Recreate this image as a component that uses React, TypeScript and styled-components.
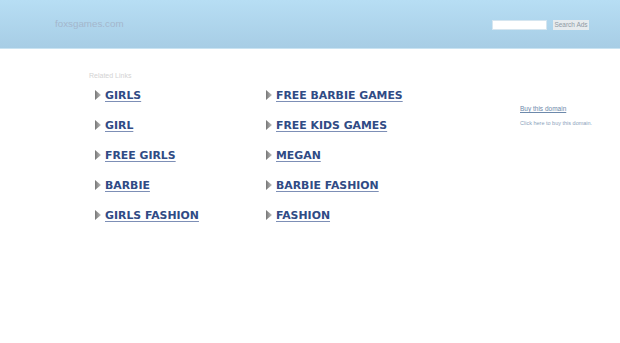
import React from 'react';
import styled, {createGlobalStyle} from 'styled-components';

const GlobalStyle = createGlobalStyle`
	html, body {
		margin: 0;
		padding: 0;
		background: #fff;
		font-family: "Liberation Sans", Arial, sans-serif;
	}
`;

const Header = styled.header`
	height: 48px;
	display: flex;
	align-items: center;
	justify-content: space-between;
	padding: 0 31px 0 55px;
	background: linear-gradient(#b7def4, #a7cde5);
	border-bottom: 1px solid #c9e3f2;
`;

const Domain = styled.div`
	font-size: 9.8px;
	color: #a4b6cc;
	margin-top: -2px;
`;

const Search = styled.form`
	display: flex;
	align-items: center;
	gap: 6px;
	margin-top: 2px;
`;

const Input = styled.input`
	width: 53px;
	height: 8px;
	padding: 0;
	border: 1px solid #d6e6f0;
	background: #fff;
	box-sizing: content-box;
`;

const Button = styled.button`
	height: 10px;
	width: 36px;
	padding: 0;
	border: none;
	background: #e6ebee;
	color: #8f9aa4;
	font-family: "Liberation Sans", Arial, sans-serif;
	font-size: 6.5px;
	line-height: 10px;
`;

const Main = styled.main`
	display: flex;
	padding-top: 22px;
`;

const Related = styled.section`
	margin-left: 89px;
	width: 420px;
`;

const Caption = styled.div`
	font-size: 7px;
	color: #d3d3d3;
	line-height: 10px;
`;

const Grid = styled.ul`
	list-style: none;
	margin: 4px 0 0 6px;
	padding: 0;
	display: grid;
	grid-template-columns: 171px 240px;
	grid-auto-flow: column;
	grid-template-rows: repeat(5, 30px);
`;

const Item = styled.li`
	display: flex;
	align-items: center;
	gap: 4px;
	height: 20px;
`;

const Link = styled.a`
	font-family: "DejaVu Sans", Verdana, sans-serif;
	font-weight: bold;
	font-size: 10.9px;
	color: #304b85;
	text-decoration: underline;
	text-decoration-color: #7d8fb6;
	text-underline-offset: 2px;
`;

const Side = styled.aside`
	margin-left: 11px;
	padding-top: 33px;
`;

const Buy = styled.a`
	display: block;
	font-size: 6.5px;
	color: #6d89ab;
	text-decoration: underline;
	line-height: 10px;
`;

const Note = styled.div`
	font-size: 5.5px;
	color: #8ba2bb;
	margin-top: 4px;
	line-height: 10px;
`;

const Arrow = () => (
	<svg width="6" height="10" viewBox="0 0 6 10">
		<defs>
			<linearGradient id="ag" x1="0" y1="0" x2="1" y2="0">
				<stop offset="0" stopColor="#777"/>
				<stop offset="1" stopColor="#bbb"/>
			</linearGradient>
		</defs>
		<polygon points="0,0 6,5 0,10" fill="url(#ag)"/>
	</svg>
);

const links = [
	'GIRLS', 'GIRL', 'FREE GIRLS', 'BARBIE', 'GIRLS FASHION',
	'FREE BARBIE GAMES', 'FREE KIDS GAMES', 'MEGAN', 'BARBIE FASHION', 'FASHION',
];

const App = (): JSX.Element => (
	<>
		<GlobalStyle/>
		<Header>
			<Domain>foxsgames.com</Domain>
			<Search onSubmit={e => e.preventDefault()}>
				<Input type="text"/>
				<Button type="submit">Search Ads</Button>
			</Search>
		</Header>
		<Main>
			<Related>
				<Caption>Related Links</Caption>
				<Grid>
					{links.map(label => (
						<Item key={label}>
							<Arrow/>
							<Link href="#">{label}</Link>
						</Item>
					))}
				</Grid>
			</Related>
			<Side>
				<Buy href="#">Buy this domain</Buy>
				<Note>Click here to buy this domain.</Note>
			</Side>
		</Main>
	</>
);

export default App;
